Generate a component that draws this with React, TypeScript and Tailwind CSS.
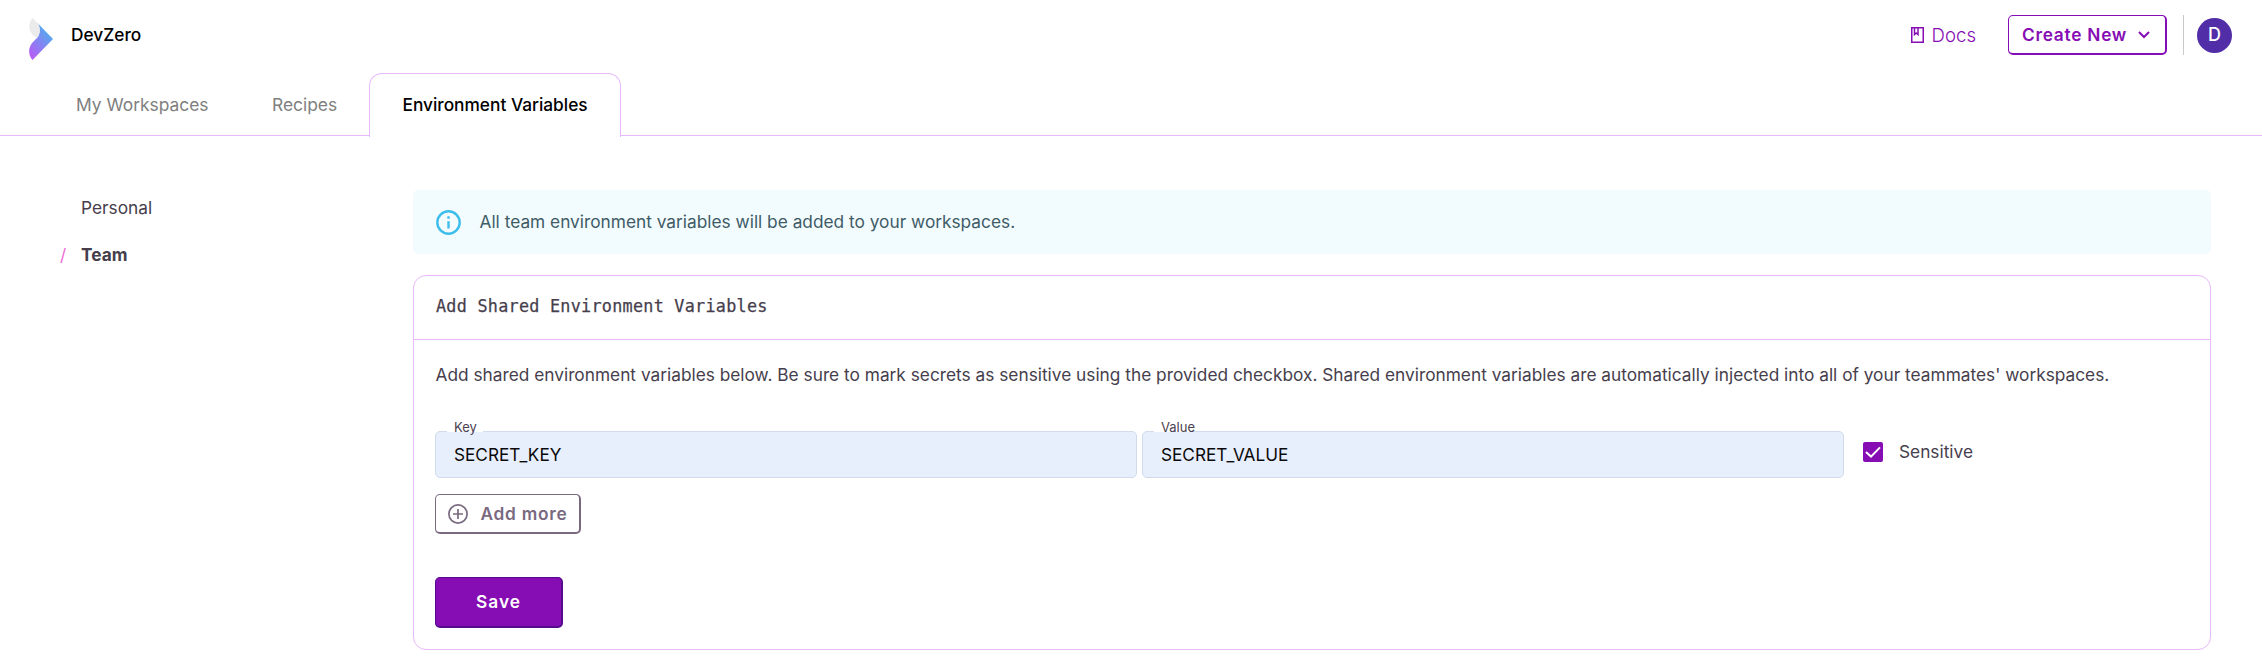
const TABS_IDLE = "flex h-[64px] items-center text-[17.4px] text-[#808080]";

function Logo() {
  return (
    <svg width="24" height="42" viewBox="0 0 24 42" className="shrink-0">
      <defs>
        <linearGradient id="lg" x1="1" y1="36" x2="22" y2="18" gradientUnits="userSpaceOnUse">
          <stop offset="0" stopColor="#b45ff6" />
          <stop offset="1" stopColor="#58a6ef" />
        </linearGradient>
      </defs>
      <path d="M8.500 5 L24 21 L3.500 42 C-1.200 37 -1 29 4 24 L8 20 C11.500 16 11.500 10 8.500 5 Z" fill="url(#lg)" />
      <path d="M3.500 0 L9 5.500 C11.500 9 11.500 16 8 20 C1 16.500 -3 8 3.500 0 Z" fill="#ebebeb" />
    </svg>
  );
}

function Field({ label, value }: { label: string; value: string }) {
  return (
    <div className="relative mt-px flex h-[47px] w-[702px] items-center rounded-[5px] border border-[#d0dcec] bg-[#e8effc] pl-[18px] pt-px text-[17.2px] text-[#0a0a0a]">
      <span className="absolute -top-px left-[11px] h-px w-[36px] bg-white" />
      <span className="absolute -top-[14px] left-[18px] text-[13px] leading-[18px] text-[#4a4150]">{label}</span>
      {value}
    </div>
  );
}

export default function App() {
  return (
    <div className="h-[662px] w-[2262px] overflow-hidden bg-white font-['Inter',sans-serif] text-[17.3px] leading-[24px] text-[#463e4c]">
      <header className="flex h-[73px] items-start justify-between pl-[29px] pr-[30px]">
        <div className="flex items-start gap-[18px]">
          <div className="pt-[18px]"><Logo /></div>
          <span className="pt-[23px] font-medium text-black">DevZero</span>
        </div>
        <div className="mt-[15px] flex h-[40px] items-center">
          <svg width="13" height="16" viewBox="0 0 13 16" className="mr-[8px]" fill="none" stroke="#860cb4" strokeWidth="1.5">
            <path d="M.75.75h11.500v14.500H.75zM3.500 1v6.500L5.250 6 7 7.500V1" />
          </svg>
          <span className="mr-[32px] text-[18.6px] font-light text-[#860cb4]">Docs</span>
          <button className="flex h-[40px] w-[159px] items-center rounded-[5px] border border-r-2 border-b-2 border-[#860cb4] pl-[13px] font-semibold tracking-[0.75px] text-[#860cb4]">
            Create New
            <svg width="12" height="8" viewBox="0 0 12 8" className="ml-[11px]" fill="none" stroke="#860cb4" strokeWidth="2">
              <path d="M1 1l5 5 5-5" />
            </svg>
          </button>
          <div className="ml-[16px] mr-[13px] h-[40px] w-px bg-[#c9c9c9]" />
          <div className="flex size-[35px] items-center justify-center rounded-full bg-[#512da8] text-[18px] font-medium text-white">D</div>
        </div>
      </header>

      <nav className="flex h-[63px] items-start border-b border-[#e8b9fc]">
        <a className={`${TABS_IDLE} w-[272px] pl-[76px]`}>My Workspaces</a>
        <a className={`${TABS_IDLE} w-[97px]`}>Recipes</a>
        <a className="flex h-[64px] w-[252px] items-center rounded-t-[13px] border border-b-0 border-[#e8b9fc] bg-white pb-px pl-[32.5px] font-medium text-black">
          Environment Variables
        </a>
      </nav>

      <div className="flex">
        <aside className="flex w-[413px] flex-col gap-[23px] pl-[60px] pt-[60px]">
          <a className="pl-[21px]">Personal</a>
          <a className="flex font-bold"><span className="w-[21px] font-normal text-[#f06bd8]">/</span>Team</a>
        </aside>
        <main className="w-[1798px] pt-[54px]">
          <div className="flex h-[64px] items-center rounded-[5px] bg-[#f2fbfe] pl-[23px] text-[#3f5b66]">
            <svg width="25" height="25" viewBox="0 0 25 25" className="mr-[18.5px]" fill="none" stroke="#3dbdec" strokeWidth="2.400">
              <circle cx="12.500" cy="12.500" r="11.200" />
              <path d="M12.500 11.200v7.300M12.500 6.300v2.500" />
            </svg>
            All team environment variables will be added to your workspaces.
          </div>
          <section className="mt-[21px] h-[375px] rounded-[13px] border border-[#e8b9fc]">
            <h2 className="flex h-[64px] items-center border-b border-[#e8b9fc] pb-[4px] pl-[22px] font-['DejaVu_Sans_Mono',monospace] text-[16.8px] tracking-[0.26px] [-webkit-text-stroke:0.25px_#463e4c]">
              Add Shared Environment Variables
            </h2>
            <div className="flex flex-col items-start pl-[21px] pt-[23px]">
              <p className="whitespace-nowrap pl-[0.5px]">
                Add shared environment variables below. Be sure to mark secrets as sensitive using the provided checkbox. Shared environment variables are automatically injected into all of your teammates' workspaces.
              </p>
              <div className="mt-[43px] flex gap-[5px]">
                <Field label="Key" value="SECRET_KEY" />
                <Field label="Value" value="SECRET_VALUE" />
                <label className="ml-[14px] flex h-[43px] items-center">
                  <svg width="20" height="20" viewBox="0 0 20 20" className="mr-[16px]">
                    <rect width="20" height="20" rx="2" fill="#860cb4" />
                    <path d="M3 10l5 4.600L17 5.400" fill="none" stroke="#fff" strokeWidth="2" />
                  </svg>
                  Sensitive
                </label>
              </div>
              <button className="mt-[16px] flex h-[40px] w-[146px] items-center rounded-[5px] border border-r-2 border-b-2 border-[#7a6a80] pl-[12px] font-semibold tracking-[0.75px] text-[#7a6a80]">
                <svg width="20" height="20" viewBox="0 0 20 20" className="mr-[12.5px]" fill="none" stroke="#7a6a80" strokeWidth="1.700">
                  <circle cx="10" cy="10" r="9.100" />
                  <path d="M10 5v10M5 10h10" />
                </svg>
                Add more
              </button>
              <button className="mt-[43px] flex h-[51px] w-[128px] items-center rounded-[5px] border border-r-2 border-b-2 border-[#560a8e] bg-[#860cb4] pl-[40px] font-semibold tracking-[1px] text-white">
                Save
              </button>
            </div>
          </section>
        </main>
      </div>
    </div>
  );
}
